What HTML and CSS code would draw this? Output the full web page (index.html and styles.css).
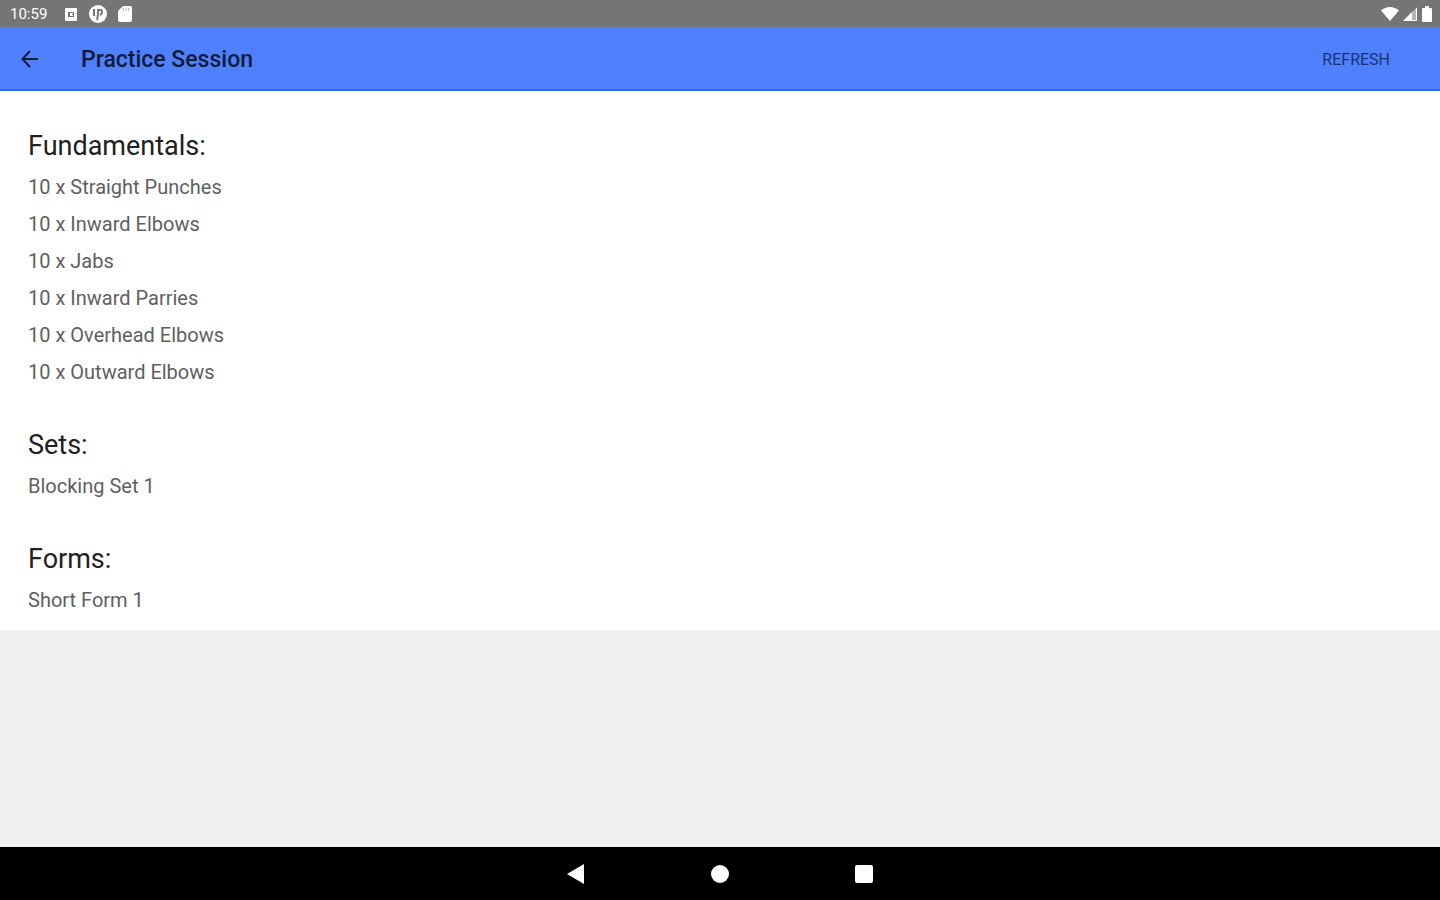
FILE: index.html
```html
<!DOCTYPE html>
<html lang="en">
<head>
    <meta charset="UTF-8">
    <meta name="viewport" content="width=device-width, initial-scale=1.0">
    <title>Practice Session</title>
    <link rel="stylesheet" href="styles.css">
</head>
<body>
    <div class="status-bar">
        <div class="status-left">
            <span class="clock">10:59</span>
            <svg width="16" height="16" viewBox="0 0 16 16">
                <path fill="#fff" fill-rule="evenodd" d="M3 2h10a1 1 0 0 1 1 1v11a1 1 0 0 1-1 1H3a1 1 0 0 1-1-1V3a1 1 0 0 1 1-1zm2 4v5h6V6z"/>
                <path fill="#fff" d="M7 7h3v1H9v1h1v1H7z"/>
            </svg>
            <svg width="18" height="18" viewBox="0 0 18 18">
                <circle cx="9" cy="9" r="9" fill="#fff"/>
                <path fill="none" stroke="#757575" stroke-width="2" d="M5 4v7"/>
                <path fill="none" stroke="#757575" stroke-width="2" d="M8 15c1-3 1-6 1-10h3c2 1 1 4-1 5"/>
            </svg>
            <svg width="16" height="16" viewBox="0 0 16 16">
                <path fill="#fff" d="M6 0h7a2 2 0 0 1 2 2v12a2 2 0 0 1-2 2H3a2 2 0 0 1-2-2V5z"/>
                <path stroke="#bbb" d="M6.500 2v3M9 2v3M11.500 2v3"/>
            </svg>
        </div>
        <div class="status-right">
            <svg width="18" height="16" viewBox="0 0 18 16">
                <path fill="#fff" d="M0 4.500C5-.3 13-.3 18 4.500L9 15z"/>
            </svg>
            <svg width="16" height="16" viewBox="0 0 16 16">
                <path fill="#fff" fill-opacity=".45" d="M1 15L15 1v14z"/>
                <path fill="#fff" d="M1 15l9-9v9z"/>
                <path fill="none" stroke="#fff" d="M2 14.500h12.500V2"/>
            </svg>
            <svg width="12" height="16" viewBox="0 0 12 16">
                <path fill="#fff" d="M4 0h4v2h2a1 1 0 0 1 1 1v12a1 1 0 0 1-1 1H2a1 1 0 0 1-1-1V3a1 1 0 0 1 1-1h2z"/>
            </svg>
        </div>
    </div>

    <header class="toolbar">
        <button type="button" class="back-btn" aria-label="Back">
            <svg width="18" height="18" viewBox="0 0 18 18">
                <path fill="none" stroke="#101b38" stroke-width="2" d="M17 9H2M9 1L1.500 9 9 17"/>
            </svg>
        </button>
        <h1>Practice Session</h1>
        <button type="button" class="refresh-btn">REFRESH</button>
    </header>

    <main>
        <div class="session">
            <section>
                <h2>Fundamentals:</h2>
                <ul>
                    <li>10 x Straight Punches</li>
                    <li>10 x Inward Elbows</li>
                    <li>10 x Jabs</li>
                    <li>10 x Inward Parries</li>
                    <li>10 x Overhead Elbows</li>
                    <li>10 x Outward Elbows</li>
                </ul>
            </section>
            <section>
                <h2>Sets:</h2>
                <ul>
                    <li>Blocking Set 1</li>
                </ul>
            </section>
            <section>
                <h2>Forms:</h2>
                <ul>
                    <li>Short Form 1</li>
                </ul>
            </section>
        </div>
    </main>

    <nav class="nav-bar">
        <button type="button" aria-label="Back">
            <svg width="20" height="20" viewBox="0 0 20 20">
                <path fill="#fff" d="M18 0v20L1 10z"/>
            </svg>
        </button>
        <button type="button" aria-label="Home">
            <svg width="20" height="20" viewBox="0 0 20 20">
                <circle cx="10" cy="10" r="9" fill="#fff"/>
            </svg>
        </button>
        <button type="button" aria-label="Overview">
            <svg width="20" height="20" viewBox="0 0 20 20">
                <rect x="1" y="1" width="18" height="18" rx="2" fill="#fff"/>
            </svg>
        </button>
    </nav>
</body>
</html>
```

FILE: styles.css
```css
* {
    margin: 0;
    padding: 0;
    box-sizing: border-box;
}

body {
    min-height: 100vh;
    display: flex;
    flex-direction: column;
    background: #f0f0f0;
    font-family: Roboto, sans-serif;
}

svg {
    display: block;
}

button {
    border: none;
    background: none;
    font-family: inherit;
    cursor: pointer;
}

.status-bar {
    display: flex;
    justify-content: space-between;
    align-items: center;
    height: 27px;
    padding: 0 7px 0 10px;
    background: #757575;
    color: #fff;
}

.status-left {
    display: flex;
    align-items: center;
    gap: 10px;
}

.status-right {
    display: flex;
    align-items: center;
    gap: 3px;
}

.clock {
    width: 43px;
    font-size: 15px;
}

.toolbar {
    display: flex;
    align-items: center;
    height: 64px;
    padding: 2px 40px 0 12px;
    background: #4f80ff;
    border-bottom: 2px solid #2f68f0;
}

.back-btn {
    padding: 9px;
}

.toolbar h1 {
    flex: 1;
    margin-left: 33px;
    font-size: 23px;
    font-weight: 500;
    color: #101b38;
}

.refresh-btn {
    padding: 10px;
    font-size: 16px;
    font-weight: 400;
    color: #1b3272;
}

main {
    flex: 1;
}

.session {
    padding: 35px 28px 11px;
    background: #fff;
}

section + section {
    margin-top: 34px;
}

h2 {
    margin-bottom: 3px;
    font-size: 27px;
    font-weight: 400;
    line-height: 40px;
    color: #212121;
}

li {
    list-style: none;
    font-size: 20px;
    line-height: 37px;
    color: #606060;
}

.nav-bar {
    display: flex;
    justify-content: center;
    align-items: center;
    gap: 104px;
    height: 53px;
    background: #000;
}

.nav-bar button {
    padding: 10px;
}
```
